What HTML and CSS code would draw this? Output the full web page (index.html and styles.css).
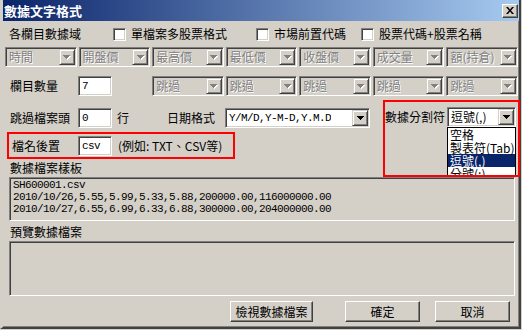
FILE: index.html
```html
<!DOCTYPE html>
<html lang="zh-Hant">
<head>
    <meta charset="UTF-8">
    <meta name="viewport" content="width=device-width, initial-scale=1.0">
    <title>數據文字格式</title>
    <link rel="stylesheet" href="styles.css">
</head>
<body>
    <div class="window">
        <div class="titlebar">
            <span class="title">數據文字格式</span>
            <span class="close">
                <svg width="8" height="7" viewBox="0 0 8 7"><path d="M0 0h2l2 2.5L6 0h2L5 3.5 8 7H6L4 4.5 2 7H0l3-3.5z" fill="#000"/></svg>
            </span>
        </div>

        <div class="content">
            <div class="row row-fields">
                <span class="lbl">各欄目數據域</span>
                <label class="check c1"><span class="box"></span>單檔案多股票格式</label>
                <label class="check c2"><span class="box"></span>市場前置代碼</label>
                <label class="check c3"><span class="box"></span>股票代碼+股票名稱</label>
            </div>

            <div class="grid row-combos">
                <div class="combo disabled"><span class="combo-text">時間</span><span class="combo-btn"><svg width="7" height="4"><path d="M0 0h7v1H0zM1 1h5v1H1zM2 2h3v1H2zM3 3h1v1H3z"/></svg></span></div>
                <div class="combo disabled"><span class="combo-text">開盤價</span><span class="combo-btn"><svg width="7" height="4"><path d="M0 0h7v1H0zM1 1h5v1H1zM2 2h3v1H2zM3 3h1v1H3z"/></svg></span></div>
                <div class="combo disabled"><span class="combo-text">最高價</span><span class="combo-btn"><svg width="7" height="4"><path d="M0 0h7v1H0zM1 1h5v1H1zM2 2h3v1H2zM3 3h1v1H3z"/></svg></span></div>
                <div class="combo disabled"><span class="combo-text">最低價</span><span class="combo-btn"><svg width="7" height="4"><path d="M0 0h7v1H0zM1 1h5v1H1zM2 2h3v1H2zM3 3h1v1H3z"/></svg></span></div>
                <div class="combo disabled"><span class="combo-text">收盤價</span><span class="combo-btn"><svg width="7" height="4"><path d="M0 0h7v1H0zM1 1h5v1H1zM2 2h3v1H2zM3 3h1v1H3z"/></svg></span></div>
                <div class="combo disabled"><span class="combo-text">成交量</span><span class="combo-btn"><svg width="7" height="4"><path d="M0 0h7v1H0zM1 1h5v1H1zM2 2h3v1H2zM3 3h1v1H3z"/></svg></span></div>
                <div class="combo disabled"><span class="combo-text">額(持倉)</span><span class="combo-btn"><svg width="7" height="4"><path d="M0 0h7v1H0zM1 1h5v1H1zM2 2h3v1H2zM3 3h1v1H3z"/></svg></span></div>
            </div>

            <div class="grid row-count">
                <div class="span2">
                    <span class="lbl-col">欄目數量</span>
                    <span class="field">7</span>
                </div>
                <div class="combo disabled"><span class="combo-text">跳過</span><span class="combo-btn"><svg width="7" height="4"><path d="M0 0h7v1H0zM1 1h5v1H1zM2 2h3v1H2zM3 3h1v1H3z"/></svg></span></div>
                <div class="combo disabled"><span class="combo-text">跳過</span><span class="combo-btn"><svg width="7" height="4"><path d="M0 0h7v1H0zM1 1h5v1H1zM2 2h3v1H2zM3 3h1v1H3z"/></svg></span></div>
                <div class="combo disabled"><span class="combo-text">跳過</span><span class="combo-btn"><svg width="7" height="4"><path d="M0 0h7v1H0zM1 1h5v1H1zM2 2h3v1H2zM3 3h1v1H3z"/></svg></span></div>
                <div class="combo disabled"><span class="combo-text">跳過</span><span class="combo-btn"><svg width="7" height="4"><path d="M0 0h7v1H0zM1 1h5v1H1zM2 2h3v1H2zM3 3h1v1H3z"/></svg></span></div>
                <div class="combo disabled"><span class="combo-text">跳過</span><span class="combo-btn"><svg width="7" height="4"><path d="M0 0h7v1H0zM1 1h5v1H1zM2 2h3v1H2zM3 3h1v1H3z"/></svg></span></div>
            </div>

            <div class="mid">
                <div class="mid-left">
                    <div class="row row-skip">
                        <span class="lbl-col">跳過檔案頭</span>
                        <span class="field">0</span>
                        <span class="unit">行</span>
                        <span class="date-lbl">日期格式</span>
                        <div class="combo date"><span class="combo-text mono">Y/M/D,Y-M-D,Y.M.D</span><span class="combo-btn"><svg width="7" height="4"><path d="M0 0h7v1H0zM1 1h5v1H1zM2 2h3v1H2zM3 3h1v1H3z"/></svg></span></div>
                    </div>
                    <div class="redbox suffix">
                        <span class="suffix-lbl">檔名後置</span>
                        <span class="field">csv</span>
                        <span class="hint">(例如: TXT、CSV等)</span>
                    </div>
                </div>
                <div class="redbox sep">
                    <div class="sep-row">
                        <span class="sep-lbl">數據分割符</span>
                        <div class="combo sep-combo"><span class="combo-text">逗號(,)</span><span class="combo-btn"><svg width="7" height="4"><path d="M0 0h7v1H0zM1 1h5v1H1zM2 2h3v1H2zM3 3h1v1H3z"/></svg></span></div>
                    </div>
                    <ul class="droplist">
                        <li>空格</li>
                        <li>製表符(Tab)</li>
                        <li class="selected">逗號(,)</li>
                        <li>分號(;)</li>
                    </ul>
                </div>
            </div>

            <div class="group-lbl">數據檔案樣板</div>
            <div class="textbox sample">SH600001.csv
2010/10/26,5.55,5.99,5.33,5.88,200000.00,116000000.00
2010/10/27,6.55,6.99,6.33,6.88,300000.00,204000000.00</div>

            <div class="group-lbl second">預覽數據檔案</div>
            <div class="textbox preview"></div>

            <div class="buttons">
                <button class="btn wide">檢視數據檔案</button>
                <button class="btn ok">確定</button>
                <button class="btn cancel">取消</button>
            </div>
        </div>
    </div>
</body>
</html>
```

FILE: styles.css
```css
body {
    margin: 0;
    background: #d4d0c8;
    font: 12px/14px "Noto Sans CJK TC", "Liberation Sans", sans-serif;
    color: #000;
}
.window {
    width: 521px;
    height: 329px;
    box-sizing: border-box;
    border-left: 3px solid #d4d0c8;
    border-right: 2px solid #404040;
    border-bottom: 2px solid #404040;
    box-shadow: inset -1px -1px #808080;
    background: #d4d0c8;
}
.titlebar {
    height: 21px;
    display: flex;
    align-items: center;
    justify-content: space-between;
    padding: 0 1px 0 1px;
    background: linear-gradient(to right, #0a246a, #a6caf0);
}
.title {
    color: #fff;
    font-weight: bold;
    font-size: 13px;
}
.close {
    width: 16px;
    height: 14px;
    box-sizing: border-box;
    display: flex;
    align-items: center;
    justify-content: center;
    background: #d4d0c8;
    border: 1px solid;
    border-color: #fff #404040 #404040 #fff;
    box-shadow: inset -1px -1px #808080;
}
.content {
    padding: 0 1px 0 2px;
}
.row {
    display: flex;
    align-items: center;
}
.row-fields {
    margin-top: 6px;
    height: 14px;
}
.lbl {
    padding-left: 4px;
}
.check {
    display: flex;
    align-items: center;
    gap: 5px;
}
.c1 { margin-left: 32px; }
.c2 { margin-left: 29px; }
.c3 { margin-left: 15px; }
.box, .field, .textbox {
    box-sizing: border-box;
    border: 1px solid;
    border-color: #808080 #fff #fff #808080;
    box-shadow: inset 1px 1px #404040, inset -1px -1px #d4d0c8;
}
.box {
    width: 13px;
    height: 13px;
    background: #fff;
}
.field {
    width: 34px;
    height: 20px;
    background: #fff;
    padding: 2px 3px;
    font: 11px/14px "Liberation Mono", monospace;
    letter-spacing: -0.6px;
}
.grid {
    display: grid;
    grid-template-columns: repeat(7, 1fr);
    gap: 2px;
    height: 20px;
}
.row-combos {
    margin-top: 6px;
}
.row-count {
    margin-top: 9px;
}
.span2 {
    grid-column: span 2;
    display: flex;
    align-items: center;
}
.lbl-col {
    width: 73px;
    padding-left: 5px;
    box-sizing: border-box;
}
.combo {
    height: 20px;
    box-sizing: border-box;
    display: flex;
    align-items: center;
    justify-content: space-between;
    padding: 1px;
    background: #fff;
    border: 1px solid;
    border-color: #808080 #fff #fff #808080;
    box-shadow: inset 1px 1px #404040, inset -1px -1px #d4d0c8;
    overflow: hidden;
}
.combo-text {
    padding-left: 2px;
    line-height: 16px;
    white-space: nowrap;
    overflow: hidden;
}
.combo-btn {
    flex: none;
    width: 16px;
    height: 16px;
    box-sizing: border-box;
    display: flex;
    align-items: center;
    justify-content: center;
    background: #d4d0c8;
    border: 1px solid;
    border-color: #d4d0c8 #404040 #404040 #d4d0c8;
    box-shadow: inset 1px 1px #fff, inset -1px -1px #808080;
    fill: #000;
}
.combo.disabled {
    background: #d4d0c8;
}
.combo.disabled .combo-text {
    color: #808080;
    text-shadow: 1px 1px #fff;
}
.combo.disabled .combo-btn svg {
    fill: #808080;
    filter: drop-shadow(1px 1px 0 #fff);
}
.mono {
    font: 11px/16px "Liberation Mono", monospace;
    letter-spacing: -0.6px;
}
.mid {
    margin-top: 4px;
    height: 59px;
    display: flex;
    align-items: flex-start;
}
.mid-left {
    width: 378px;
    flex: none;
}
.row-skip {
    margin-top: 8px;
    height: 20px;
}
.unit {
    margin-left: 5px;
}
.date-lbl {
    margin-left: 38px;
}
.combo.date {
    margin-left: 10px;
    width: 145px;
}
.redbox {
    box-sizing: border-box;
    border: 2px solid #ff0000;
}
.suffix {
    margin-top: 4px;
    margin-left: 2px;
    width: 228px;
    height: 27px;
    display: flex;
    align-items: center;
    padding-left: 3px;
}
.suffix-lbl {
    width: 66px;
}
.hint {
    margin-left: 6px;
}
.sep {
    flex: none;
    width: 137px;
    height: 77px;
    position: relative;
    overflow: hidden;
}
.sep-row {
    display: flex;
    align-items: center;
    margin-top: 5px;
    height: 20px;
}
.sep-lbl {
    width: 62px;
}
.sep-combo {
    width: 69px;
}
.droplist {
    position: absolute;
    left: 62px;
    top: 25px;
    width: 69px;
    box-sizing: border-box;
    margin: 0;
    padding: 0;
    list-style: none;
    background: #fff;
    border: 1px solid #000;
}
.droplist li {
    height: 13px;
    line-height: 13px;
    padding-left: 2px;
    white-space: nowrap;
}
.droplist .selected {
    background: #0a246a;
    color: #fff;
}
.group-lbl {
    margin-top: 2px;
    height: 14px;
    padding-left: 5px;
}
.group-lbl.second {
    margin-top: 4px;
}
.textbox {
    margin: 2px 3px 0 4px;
    background: #d4d0c8;
}
.sample {
    height: 44px;
    padding: 1px 3px;
    white-space: pre;
    font: 11px/12px "Liberation Mono", monospace;
    letter-spacing: -0.6px;
}
.preview {
    height: 55px;
}
.buttons {
    margin-top: 5px;
    display: flex;
    justify-content: flex-end;
    padding-right: 8px;
}
.btn {
    height: 21px;
    box-sizing: border-box;
    padding: 0;
    font: inherit;
    color: #000;
    background: #d4d0c8;
    border: 1px solid;
    border-color: #fff #404040 #404040 #fff;
    box-shadow: inset -1px -1px #808080;
}
.btn.wide { width: 83px; }
.btn.ok { width: 75px; margin-left: 32px; }
.btn.cancel { width: 75px; margin-left: 15px; }
```
